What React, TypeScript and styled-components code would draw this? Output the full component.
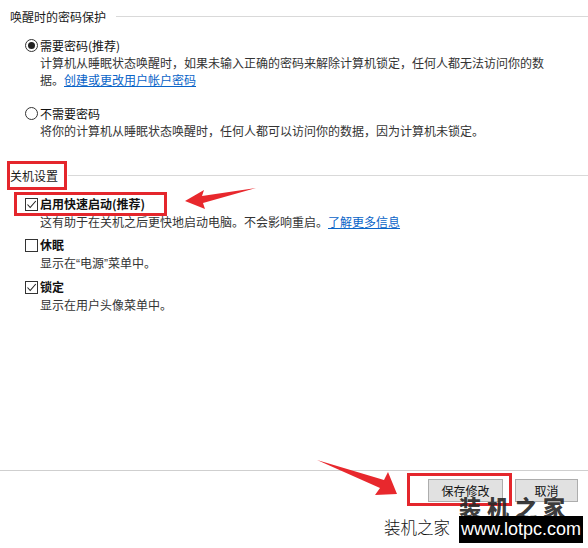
import React from 'react';
import styled, { createGlobalStyle } from 'styled-components';

const GlobalStyle = createGlobalStyle`
  html, body {
    margin: 0;
    padding: 0;
    background: #ffffff;
  }
  body {
    font-family: "Noto Sans CJK SC", "Microsoft YaHei", sans-serif;
    color: #1a1a1a;
  }
`;

const Page = styled.div`
  position: relative;
  width: 588px;
  height: 548px;
  display: flex;
  flex-direction: column;
  overflow: hidden;
  background: #fff;
`;

const Content = styled.div`
  flex: 1;
  padding: 8px 0 0 10px;
`;

const SectionHeader = styled.div<{ $gap: number }>`
  display: flex;
  align-items: center;
  margin-top: ${p => p.$gap}px;
  font-size: 12px;
  line-height: 17px;
`;

const HeaderRule = styled.div`
  flex: 1;
  height: 1px;
  margin-left: 10px;
  background: #d9d9d9;
`;

const Option = styled.div<{ $gap: number }>`
  margin-top: ${p => p.$gap}px;
  padding-left: 15px;
`;

const OptionLabel = styled.div<{ $bold?: boolean; $lh: number }>`
  display: flex;
  align-items: center;
  gap: 2px;
  font-size: 12px;
  line-height: ${p => p.$lh}px;
  font-weight: ${p => (p.$bold ? 700 : 400)};
  color: #111;
`;

const OptionDesc = styled.div<{ $lh: number }>`
  padding-left: 15px;
  font-size: 12px;
  line-height: ${p => p.$lh}px;
  color: #333;
  width: 507px;
`;

const Quote = styled.span`
  font-family: "Liberation Sans", Arial, sans-serif;
`;

const Link = styled.a`
  color: #0a64c8;
  text-decoration: underline;
  cursor: pointer;
`;

const RadioCircle = styled.span<{ $checked?: boolean }>`
  box-sizing: border-box;
  width: 13px;
  height: 13px;
  border: 1px solid #333;
  border-radius: 50%;
  display: inline-flex;
  align-items: center;
  justify-content: center;
  &::after {
    content: '';
    width: 7px;
    height: 7px;
    border-radius: 50%;
    background: ${p => (p.$checked ? '#222' : 'transparent')};
  }
`;

const CheckBox = styled.span`
  box-sizing: border-box;
  width: 13px;
  height: 13px;
  border: 1px solid #333;
  display: inline-flex;
  align-items: center;
  justify-content: center;
  background: #fff;
`;

const Footer = styled.div`
  box-sizing: border-box;
  height: 78px;
  border-top: 1px solid #cfcfcf;
  display: flex;
  justify-content: flex-end;
  align-items: flex-start;
  gap: 12px;
  padding: 8px 10px 0 0;
`;

const Button = styled.button<{ $width: number }>`
  width: ${p => p.$width}px;
  height: 23px;
  box-sizing: border-box;
  border: 1px solid #adadad;
  background: #e1e1e1;
  font-family: "Noto Sans CJK SC", sans-serif;
  font-size: 12px;
  color: #111;
  padding: 0;
`;

// annotation overlays
const RedBox = styled.div<{ $l: number; $t: number; $w: number; $h: number }>`
  position: absolute;
  left: ${p => p.$l}px;
  top: ${p => p.$t}px;
  width: ${p => p.$w}px;
  height: ${p => p.$h}px;
  box-sizing: border-box;
  border: 3px solid #e4262c;
  pointer-events: none;
`;

const ArrowLayer = styled.svg`
  position: absolute;
  left: 0;
  top: 0;
  pointer-events: none;
`;

const WatermarkBig = styled.div`
  position: absolute;
  left: 459px;
  top: 491px;
  font-size: 22px;
  font-weight: 900;
  letter-spacing: 6px;
  color: rgba(40, 40, 40, 0.92);
  line-height: 30px;
`;

const WatermarkSmall = styled.div`
  position: absolute;
  left: 384px;
  top: 515px;
  font-size: 16.5px;
  font-weight: 300;
  line-height: 24px;
  color: #111;
`;

const WatermarkUrl = styled.div`
  position: absolute;
  left: 459px;
  top: 516px;
  width: 124px;
  height: 27px;
  background: #000;
  color: #fff;
  font-family: "Liberation Sans", Arial, sans-serif;
  font-size: 18px;
  line-height: 27px;
  text-align: center;
`;

const Check = () => (
  <svg width="11" height="11" viewBox="0 0 11 11">
    <polyline points="1.5,5.5 4.2,8.5 9.8,2" fill="none" stroke="#222" strokeWidth="1.1" />
  </svg>
);

const App: React.FC = () => {
  return (
    <Page>
      <GlobalStyle />
      <Content>
        <SectionHeader $gap={0}>
          唤醒时的密码保护
          <HeaderRule />
        </SectionHeader>

        <Option $gap={12}>
          <OptionLabel $lh={17}>
            <RadioCircle $checked />
            需要密码(推荐)
          </OptionLabel>
          <OptionDesc $lh={17}>
            计算机从睡眠状态唤醒时，如果未输入正确的密码来解除计算机锁定，任何人都无法访问你的数据。<Link>创建或更改用户帐户密码</Link>
          </OptionDesc>
        </Option>

        <Option $gap={17}>
          <OptionLabel $lh={17}>
            <RadioCircle />
            不需要密码
          </OptionLabel>
          <OptionDesc $lh={17}>将你的计算机从睡眠状态唤醒时，任何人都可以访问你的数据，因为计算机未锁定。</OptionDesc>
        </Option>

        <SectionHeader $gap={28}>
          关机设置
          <HeaderRule />
        </SectionHeader>

        <Option $gap={11}>
          <OptionLabel $bold $lh={18}>
            <CheckBox><Check /></CheckBox>
            启用快速启动(推荐)
          </OptionLabel>
          <OptionDesc $lh={18}>
            这有助于在关机之后更快地启动电脑。不会影响重启。<Link>了解更多信息</Link>
          </OptionDesc>
        </Option>

        <Option $gap={5}>
          <OptionLabel $bold $lh={18}>
            <CheckBox />
            休眠
          </OptionLabel>
          <OptionDesc $lh={18}>显示在<Quote>“</Quote>电源<Quote>”</Quote>菜单中。</OptionDesc>
        </Option>

        <Option $gap={5}>
          <OptionLabel $bold $lh={18}>
            <CheckBox><Check /></CheckBox>
            锁定
          </OptionLabel>
          <OptionDesc $lh={18}>显示在用户头像菜单中。</OptionDesc>
        </Option>
      </Content>

      <Footer>
        <Button $width={75}>保存修改</Button>
        <Button $width={63}>取消</Button>
      </Footer>

      <RedBox $l={7} $t={161} $w={60} $h={29} />
      <RedBox $l={14} $t={192} $w={153} $h={24} />
      <RedBox $l={407} $t={473} $w={105} $h={33} />

      <ArrowLayer width="588" height="548" viewBox="0 0 588 548">
        <polygon points="185,201 204,190 202,196 256,188 203,203 205,209" fill="#e8282d" />
        <polygon points="397,494 375,495 380,488 317,460 384,480 388,472" fill="#e8282d" />
      </ArrowLayer>

      <WatermarkBig>装机之家</WatermarkBig>
      <WatermarkSmall>装机之家</WatermarkSmall>
      <WatermarkUrl>www.lotpc.com</WatermarkUrl>
    </Page>
  );
};

export default App;
